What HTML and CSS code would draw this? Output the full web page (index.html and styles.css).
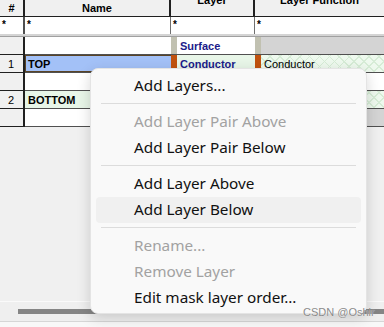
FILE: index.html
```html
<!DOCTYPE html>
<html lang="en">

<head>
    <meta charset="UTF-8">
    <title>Layer Stack</title>
    <link rel="stylesheet" href="styles.css">
</head>

<body>
    <div class="grid">
        <div class="row head">
            <div class="c num">#</div>
            <div class="c name">Name</div>
            <div class="c layer"><span class="up">Layer</span></div>
            <div class="c func"><span class="up">Layer Function</span></div>
        </div>
        <div class="row filter">
            <div class="c num">*</div>
            <div class="c name">*</div>
            <div class="c layer">*</div>
            <div class="c func">*</div>
        </div>
        <div class="band"></div>

        <div class="row data">
            <div class="c num"></div>
            <div class="c name"></div>
            <div class="c layer surf"><span class="strip"></span><b>Surface</b></div>
            <div class="c func surf gray"><span class="strip"></span></div>
        </div>
        <div class="row data">
            <div class="c num">1</div>
            <div class="c name"><span class="sel">TOP</span></div>
            <div class="c layer cond green"><span class="strip"></span><b>Conductor</b></div>
            <div class="c func cond hatch"><span class="strip"></span>Conductor</div>
        </div>
        <div class="row data">
            <div class="c num"></div>
            <div class="c name"></div>
            <div class="c layer"></div>
            <div class="c func"></div>
        </div>
        <div class="row data">
            <div class="c num">2</div>
            <div class="c name green">BOTTOM</div>
            <div class="c layer green"></div>
            <div class="c func hatch"></div>
        </div>
        <div class="row data">
            <div class="c num"></div>
            <div class="c name"></div>
            <div class="c layer"></div>
            <div class="c func gray"></div>
        </div>
    </div>

    <div class="empty"></div>
    <div class="hscroll">
        <div class="thumb"></div>
    </div>
    <div class="foot"></div>

    <div class="menu">
        <div class="item">Add Layers...</div>
        <div class="sep"></div>
        <div class="item off">Add Layer Pair Above</div>
        <div class="item">Add Layer Pair Below</div>
        <div class="sep"></div>
        <div class="item">Add Layer Above</div>
        <div class="item hover">Add Layer Below</div>
        <div class="sep"></div>
        <div class="item off">Rename...</div>
        <div class="item off">Remove Layer</div>
        <div class="item">Edit mask layer order...</div>
    </div>

    <div class="mark">CSDN @Oshir</div>
</body>

</html>
```

FILE: styles.css
```css
* {
    margin: 0;
    padding: 0;
    box-sizing: border-box;
}

body {
    width: 384px;
    height: 327px;
    overflow: hidden;
    background: #f0f0f0;
    font-family: "Liberation Sans", Arial, sans-serif;
    font-size: 11px;
    color: #000;
    display: flex;
    flex-direction: column;
}

.grid {
    display: flex;
    flex-direction: column;
}

.row {
    display: grid;
    grid-template-columns: 25px 146px 84px 129px;
}

.c {
    display: flex;
    align-items: center;
    overflow: hidden;
    white-space: nowrap;
}

/* header */
.head {
    height: 17px;
    background: #f0f0f0;
    border-bottom: 1px solid #202020;
}

.head .c {
    justify-content: center;
    font-weight: bold;
    border-right: 2px solid #202020;
}

.head .func {
    border-right: none;
}

.up {
    margin-top: -16px;
}

/* filter row */
.filter {
    height: 17px;
    background: #fff;
}

.filter .c {
    align-items: flex-start;
    padding: 2px 0 0 2px;
    font-weight: bold;
    font-size: 10px;
    border-right: 1px solid #707070;
}

.filter .c.num {
    border-right: 2px solid #505050;
}

.filter .func {
    border-right: none;
}

.band {
    height: 3px;
    background: #d4d4d4;
    border-bottom: 1px solid #a0a0a0;
}

/* data rows */
.data {
    height: 18px;
}

.data:first-of-type {
    height: 19px;
}

.data .c {
    border-bottom: 1px solid #505050;
    background: #fff;
}

.data .num {
    justify-content: center;
    background: #f0f0f0;
    border-right: 2px solid #202020;
    border-bottom-color: #202020;
    padding-right: 1px;
}

.data .name {
    font-weight: bold;
    padding-left: 3px;
}

.data .name:has(.sel) {
    padding: 0;
}

.sel {
    flex: 1;
    height: 17px;
    display: flex;
    align-items: center;
    padding-left: 2px;
    background: #a3c1f7;
    border: 1px solid #5a4426;
    border-right-width: 0;
}

.strip {
    width: 6px;
    align-self: stretch;
    flex-shrink: 0;
    margin-right: 3px;
}

.surf .strip {
    background: #c1c1b1;
}

.cond .strip {
    background: #c0520e;
}

.layer b {
    color: #1b1b8a;
}

.data .gray {
    background: #d4d4d4;
}

.data .green {
    background: #e8f6e8;
}

.data .hatch {
    background-color: #eef9ee;
    background-image:
        repeating-linear-gradient(45deg, #d6ecd6 0 1px, transparent 1px 7px),
        repeating-linear-gradient(-45deg, #d6ecd6 0 1px, transparent 1px 7px);
}

/* empty area and scrollbar */
.empty {
    flex: 1;
    background: #f0f0f0;
    border-bottom: 1px solid #fafafa;
}

.hscroll {
    height: 20px;
    padding: 7px 0 0 18px;
    background: #efefef;
    border-bottom: 1px solid #d6d6d6;
}

.thumb {
    height: 5px;
    background: #858585;
}

.foot {
    height: 5px;
    background: #f8f8f8;
}

/* context menu */
.menu {
    position: absolute;
    left: 90px;
    top: 68px;
    width: 277px;
    height: 246px;
    padding: 4px 5px;
    background: #f9f9f9;
    border: 1px solid #e4e4e4;
    border-radius: 8px;
    box-shadow: 0 4px 14px rgba(0, 0, 0, 0.16);
    font-family: "Noto Sans", "Open Sans", sans-serif;
    font-size: 15.3px;
    color: #111;
}

.item {
    height: 26px;
    line-height: 24px;
    padding-left: 38px;
    border-radius: 4px;
}

.item.off {
    color: #a2a2a2;
}

.item.hover {
    background: #f0f0f0;
}

.sep {
    height: 1px;
    margin: 4px 5px 5px;
    background: #dcdcdc;
}

.mark {
    position: absolute;
    left: 303px;
    top: 306px;
    font-size: 11px;
    color: #8a8a8a;
    text-shadow: 0 0 1px #fff;
}
```
